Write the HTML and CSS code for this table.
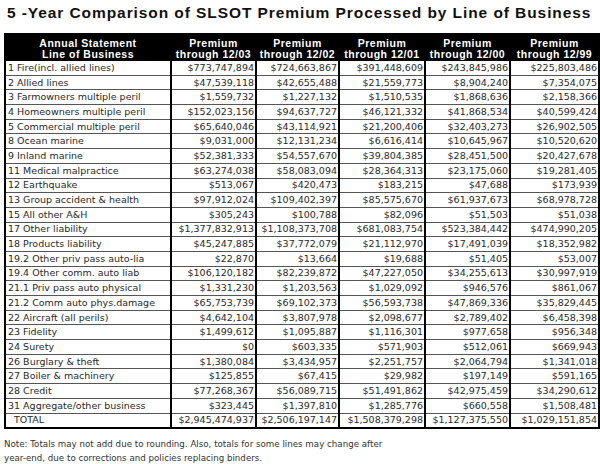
FILE: index.html
```html
<!DOCTYPE html>
<html>
<head>
<meta charset="utf-8">
<link rel="stylesheet" href="styles.css">
</head>
<body>
<div class="page">
  <h1 class="title">5 -Year Comparison of SLSOT Premium Processed by Line of Business</h1>
  <table class="grid">
    <colgroup>
      <col class="c-line"><col class="c-n1"><col class="c-n2"><col class="c-n3"><col class="c-n4"><col class="c-n5">
    </colgroup>
    <thead>
      <tr>
        <th>Annual Statement<br>Line of Business</th>
        <th>Premium<br>through 12/03</th>
        <th>Premium<br>through 12/02</th>
        <th>Premium<br>through 12/01</th>
        <th>Premium<br>through 12/00</th>
        <th>Premium<br>through 12/99</th>
      </tr>
    </thead>
    <tbody>
      <tr><td>1 Fire(incl. allied lines)</td><td>$773,747,894</td><td>$724,663,867</td><td>$391,448,609</td><td>$243,845,986</td><td>$225,803,486</td></tr>
      <tr><td>2 Allied lines</td><td>$47,539,118</td><td>$42,655,488</td><td>$21,559,773</td><td>$8,904,240</td><td>$7,354,075</td></tr>
      <tr><td>3 Farmowners multiple peril</td><td>$1,559,732</td><td>$1,227,132</td><td>$1,510,535</td><td>$1,868,636</td><td>$2,158,366</td></tr>
      <tr><td>4 Homeowners multiple peril</td><td>$152,023,156</td><td>$94,637,727</td><td>$46,121,332</td><td>$41,868,534</td><td>$40,599,424</td></tr>
      <tr><td>5 Commercial multiple peril</td><td>$65,640,046</td><td>$43,114,921</td><td>$21,200,406</td><td>$32,403,273</td><td>$26,902,505</td></tr>
      <tr><td>8 Ocean marine</td><td>$9,031,000</td><td>$12,131,234</td><td>$6,616,414</td><td>$10,645,967</td><td>$10,520,620</td></tr>
      <tr><td>9 Inland marine</td><td>$52,381,333</td><td>$54,557,670</td><td>$39,804,385</td><td>$28,451,500</td><td>$20,427,678</td></tr>
      <tr><td>11 Medical malpractice</td><td>$63,274,038</td><td>$58,083,094</td><td>$28,364,313</td><td>$23,175,060</td><td>$19,281,405</td></tr>
      <tr><td>12 Earthquake</td><td>$513,067</td><td>$420,473</td><td>$183,215</td><td>$47,688</td><td>$173,939</td></tr>
      <tr><td>13 Group accident &amp; health</td><td>$97,912,024</td><td>$109,402,397</td><td>$85,575,670</td><td>$61,937,673</td><td>$68,978,728</td></tr>
      <tr><td>15 All other A&amp;H</td><td>$305,243</td><td>$100,788</td><td>$82,096</td><td>$51,503</td><td>$51,038</td></tr>
      <tr><td>17 Other liability</td><td>$1,377,832,913</td><td>$1,108,373,708</td><td>$681,083,754</td><td>$523,384,442</td><td>$474,990,205</td></tr>
      <tr><td>18 Products liability</td><td>$45,247,885</td><td>$37,772,079</td><td>$21,112,970</td><td>$17,491,039</td><td>$18,352,982</td></tr>
      <tr><td>19.2 Other priv pass auto-lia</td><td>$22,870</td><td>$13,664</td><td>$19,688</td><td>$51,405</td><td>$53,007</td></tr>
      <tr><td>19.4 Other comm. auto liab</td><td>$106,120,182</td><td>$82,239,872</td><td>$47,227,050</td><td>$34,255,613</td><td>$30,997,919</td></tr>
      <tr><td>21.1 Priv pass auto physical</td><td>$1,331,230</td><td>$1,203,563</td><td>$1,029,092</td><td>$946,576</td><td>$861,067</td></tr>
      <tr><td>21.2 Comm auto phys.damage</td><td>$65,753,739</td><td>$69,102,373</td><td>$56,593,738</td><td>$47,869,336</td><td>$35,829,445</td></tr>
      <tr><td>22 Aircraft (all perils)</td><td>$4,642,104</td><td>$3,807,978</td><td>$2,098,677</td><td>$2,789,402</td><td>$6,458,398</td></tr>
      <tr><td>23 Fidelity</td><td>$1,499,612</td><td>$1,095,887</td><td>$1,116,301</td><td>$977,658</td><td>$956,348</td></tr>
      <tr><td>24 Surety</td><td>$0</td><td>$603,335</td><td>$571,903</td><td>$512,061</td><td>$669,943</td></tr>
      <tr><td>26 Burglary &amp; theft</td><td>$1,380,084</td><td>$3,434,957</td><td>$2,251,757</td><td>$2,064,794</td><td>$1,341,018</td></tr>
      <tr><td>27 Boiler &amp; machinery</td><td>$125,855</td><td>$67,415</td><td>$29,982</td><td>$197,149</td><td>$591,165</td></tr>
      <tr><td>28 Credit</td><td>$77,268,367</td><td>$56,089,715</td><td>$51,491,862</td><td>$42,975,459</td><td>$34,290,612</td></tr>
      <tr><td>31 Aggregate/other business</td><td>$323,445</td><td>$1,397,810</td><td>$1,285,776</td><td>$660,558</td><td>$1,508,481</td></tr>
      <tr class="total"><td>TOTAL</td><td>$2,945,474,937</td><td>$2,506,197,147</td><td>$1,508,379,298</td><td>$1,127,375,550</td><td>$1,029,151,854</td></tr>
    </tbody>
  </table>
  <p class="note">Note: Totals may not add due to rounding. Also, totals for some lines may change after<br>year-end, due to corrections and policies replacing binders.</p>
</div>
</body>
</html>
```

FILE: styles.css
```css
html, body {
  margin: 0;
  padding: 0;
  background: #ffffff;
}
.page {
  width: 600px;
  height: 464px;
  padding: 4px 2px 0 4px;
  box-sizing: border-box;
  overflow: hidden;
}
.title {
  margin: 0 0 0 3px;
  font-family: "Liberation Sans", Arial, sans-serif;
  font-weight: bold;
  font-size: 15.5px;
  line-height: 18px;
  height: 29px;
  color: #111;
  letter-spacing: 0.92px;
  white-space: nowrap;
}
.grid {
  width: 594px;
  border-collapse: collapse;
  table-layout: fixed;
  border: 2px solid #000;
}
.c-line { width: 166px; }
.c-n1 { width: 85px; }
.c-n2 { width: 83px; }
.c-n3 { width: 86px; }
.c-n4 { width: 85px; }
.c-n5 { width: 89px; }
.grid th {
  background: #000;
  color: #fff;
  font-family: "Liberation Sans", Arial, sans-serif;
  font-weight: bold;
  font-size: 10.5px;
  line-height: 11px;
  letter-spacing: 0.5px;
  padding: 2px 0 1px;
  height: 23px;
  text-align: center;
  white-space: nowrap;
  border-left: 2px solid #000;
}
.grid td {
  font-family: "DejaVu Sans", sans-serif;
  font-size: 9.5px;
  color: #2a2a2a;
  height: 13.7px;
  padding: 0 1px 0 2px;
  line-height: 12px;
  text-align: right;
  white-space: nowrap;
  border-left: 2px solid #000;
  border-bottom: 1px solid #555;
  overflow: hidden;
}
.grid td:first-child {
  text-align: left;
}
.grid .total td:first-child {
  padding-left: 8px;
}
.note {
  margin: 8px 0 0 0;
  font-family: "DejaVu Sans", sans-serif;
  font-size: 8.7px;
  line-height: 14px;
  color: #333;
}
```
